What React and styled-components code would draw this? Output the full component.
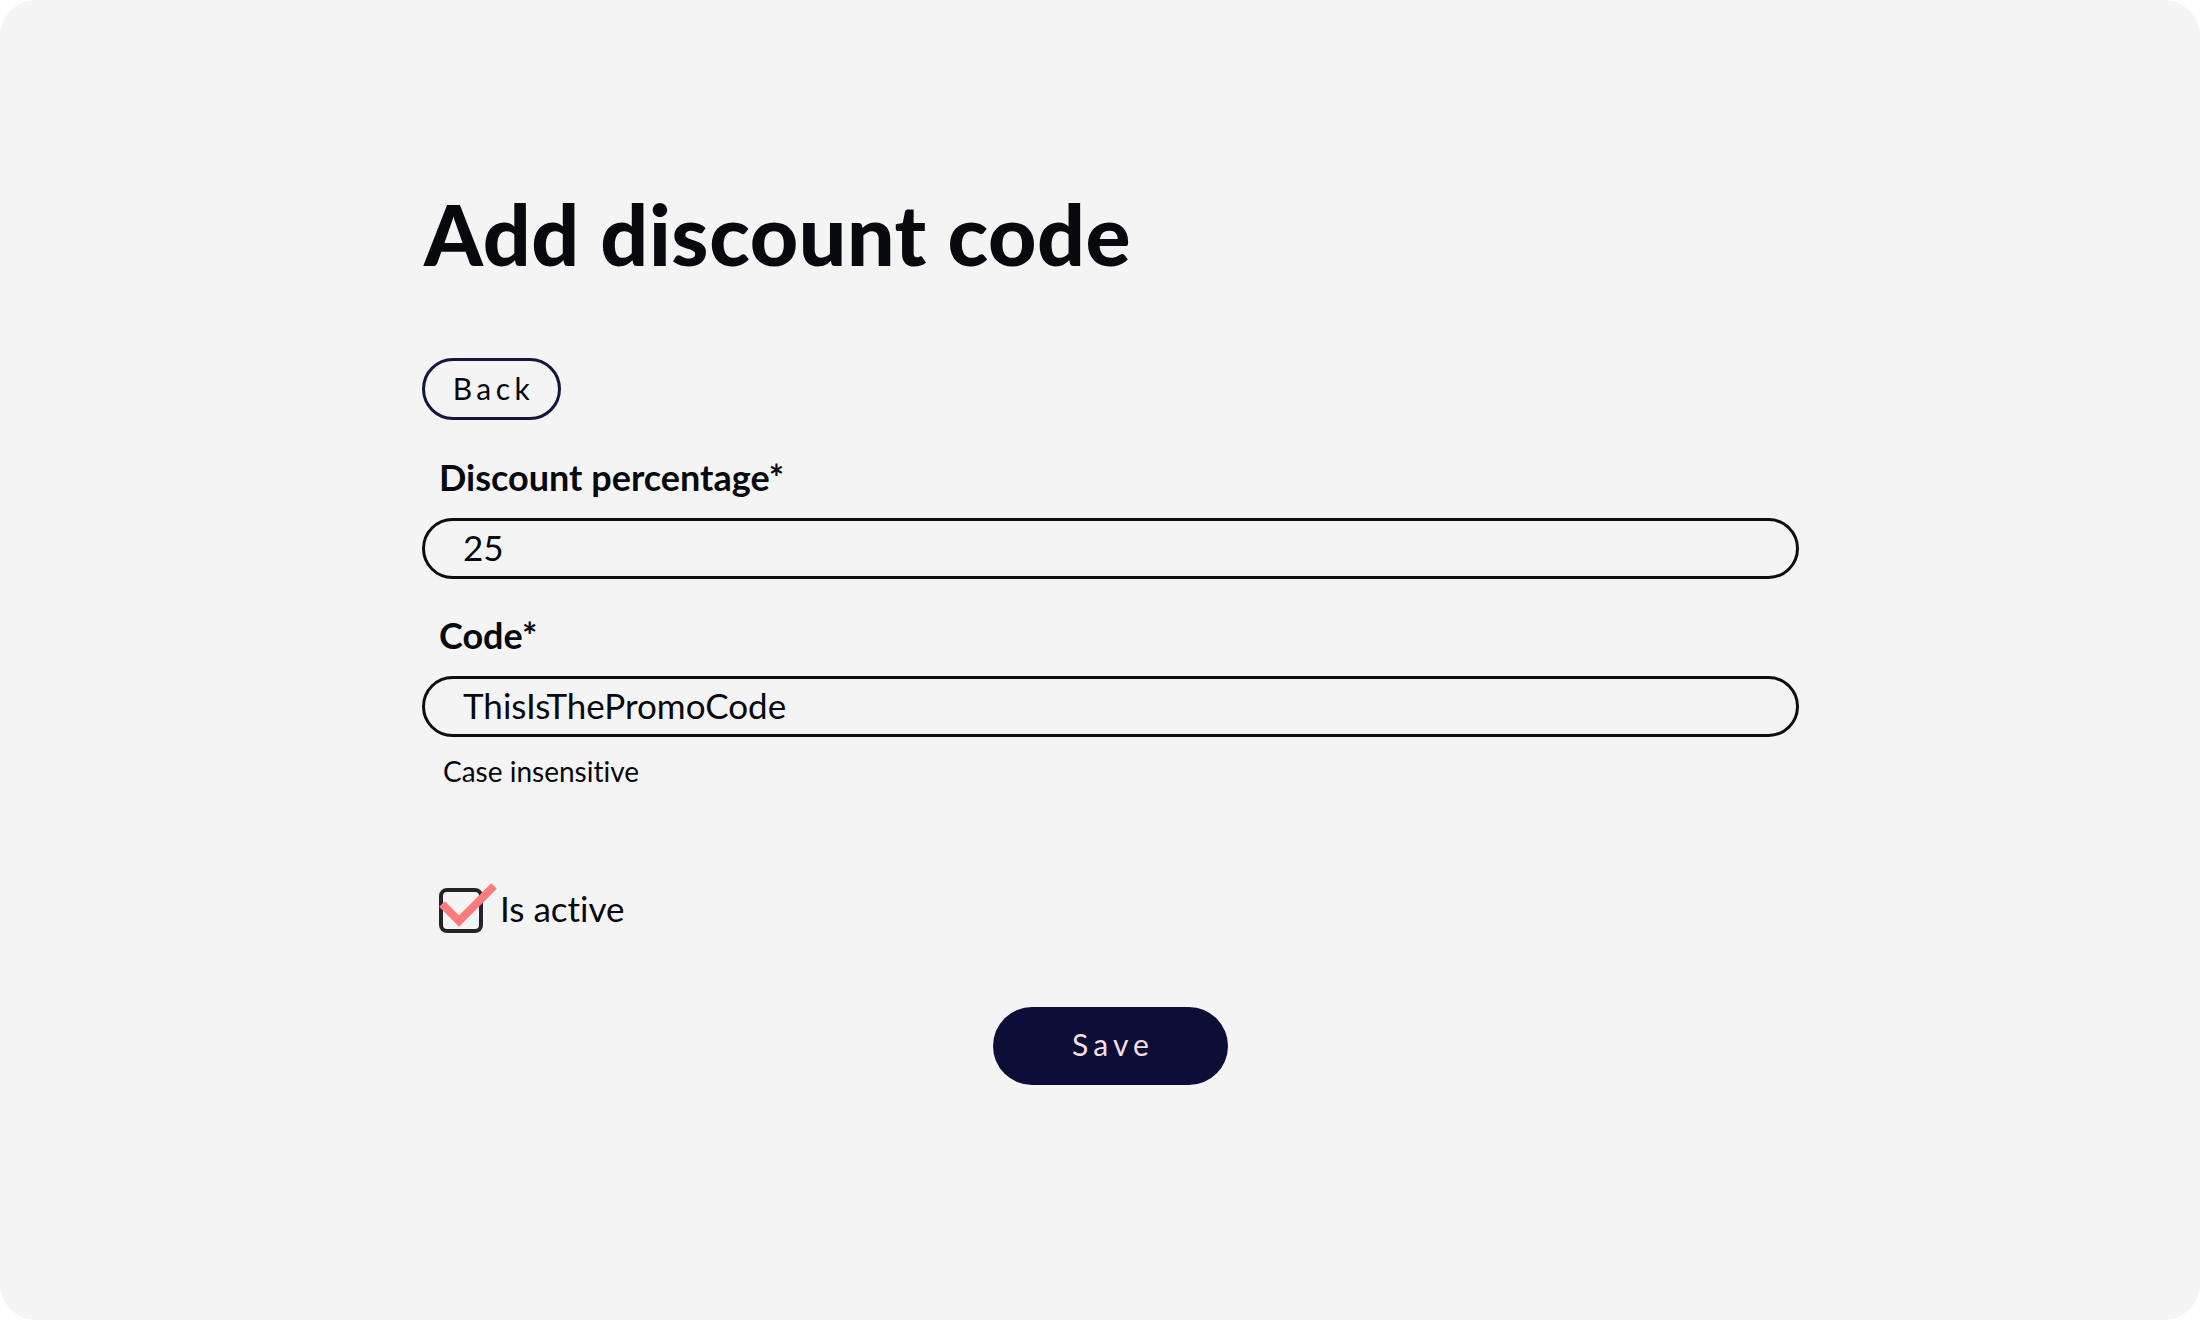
import React, { useState } from 'react';
import styled, { createGlobalStyle } from 'styled-components';

//#region styled-components
const GlobalStyle = createGlobalStyle`
    html, body {
        margin: 0;
        padding: 0;
        background: #ffffff;
    }
    * {
        box-sizing: border-box;
    }
`;

const Page = styled.div`
    width: 2200px;
    min-height: 1320px;
    padding: 192px 0 0 422px;

    background-color: #f4f4f4;
    border-radius: 36px;
    font-family: Lato, 'Open Sans', sans-serif;
    font-variant-ligatures: none;
    color: #08080f;
`;

const Form = styled.form`
    display: flex;
    flex-direction: column;
    width: 1377px;
`;

const Title = styled.h1`
    margin: 0 0 82px 2px;

    font-size: 84px;
    line-height: 1;
    font-weight: 900;
    letter-spacing: 0.6px;
`;

const OutlineButton = styled.button`
    align-self: flex-start;
    width: 139px;
    height: 62px;
    padding: 0 0 3px 4px;

    background: transparent;
    border: 3px solid #15163f;
    border-radius: 999px;
    font-family: inherit;
    font-size: 30px;
    letter-spacing: 0.15em;
    color: #08080f;
`;

const Label = styled.label`
    display: block;
    margin: ${(props) => props.$top}px 0 23px 17px;

    font-size: 36px;
    line-height: 1;
    font-weight: 700;
`;

const TextInput = styled.input`
    width: 100%;
    height: 61px;
    padding: 0 38px 3px;

    background: transparent;
    border: 3px solid #0d0d12;
    border-radius: 999px;
    outline: none;
    font-family: inherit;
    font-variant-ligatures: none;
    font-size: 35px;
    color: #08080f;
`;

const Hint = styled.div`
    margin: 20px 0 0 21px;

    font-size: 28px;
    line-height: 1;
`;

const CheckRow = styled.label`
    display: flex;
    align-items: center;
    gap: 17px;
    margin: 103px 0 0 17px;

    font-size: 35px;
    line-height: 1;
`;

const CheckText = styled.span`
    padding-bottom: 5px;
`;

const Box = styled.span`
    position: relative;
    width: 44px;
    height: 45px;

    border: 4px solid #242428;
    border-radius: 8px;
`;

const Tick = styled.svg`
    position: absolute;
    left: -4px;
    top: -8px;
    overflow: visible;
`;

const SolidButton = styled.button`
    align-self: center;
    width: 235px;
    height: 78px;
    margin-top: 74px;
    padding: 0 0 4px 5px;

    background-color: #0c0e38;
    border: none;
    border-radius: 999px;
    font-family: inherit;
    font-size: 30px;
    letter-spacing: 0.17em;
    color: #f7dde4;
`;
//#endregion

const Checkbox = ({ checked }) => (
    <Box>
        {checked && (
            <Tick width="58" height="44" viewBox="0 0 58 44">
                <path
                    d="M3 20 L20 37 L55 2"
                    fill="none"
                    stroke="#ff7a7a"
                    strokeWidth="8"
                />
            </Tick>
        )}
    </Box>
);

const App = () => {
    const [percentage, setPercentage] = useState('25');
    const [code, setCode] = useState('ThisIsThePromoCode');
    const [active] = useState(true);

    return (
        <>
            <GlobalStyle />
            <Page>
                <Form onSubmit={(e) => e.preventDefault()}>
                    <Title>Add discount code</Title>
                    <OutlineButton type="button">Back</OutlineButton>

                    <Label $top={39}>Discount percentage*</Label>
                    <TextInput
                        value={percentage}
                        onChange={(e) => setPercentage(e.target.value)}
                    />

                    <Label $top={38}>Code*</Label>
                    <TextInput
                        value={code}
                        onChange={(e) => setCode(e.target.value)}
                    />
                    <Hint>Case insensitive</Hint>

                    <CheckRow>
                        <Checkbox checked={active} />
                        <CheckText>Is active</CheckText>
                    </CheckRow>

                    <SolidButton type="submit">Save</SolidButton>
                </Form>
            </Page>
        </>
    );
};

export default App;
